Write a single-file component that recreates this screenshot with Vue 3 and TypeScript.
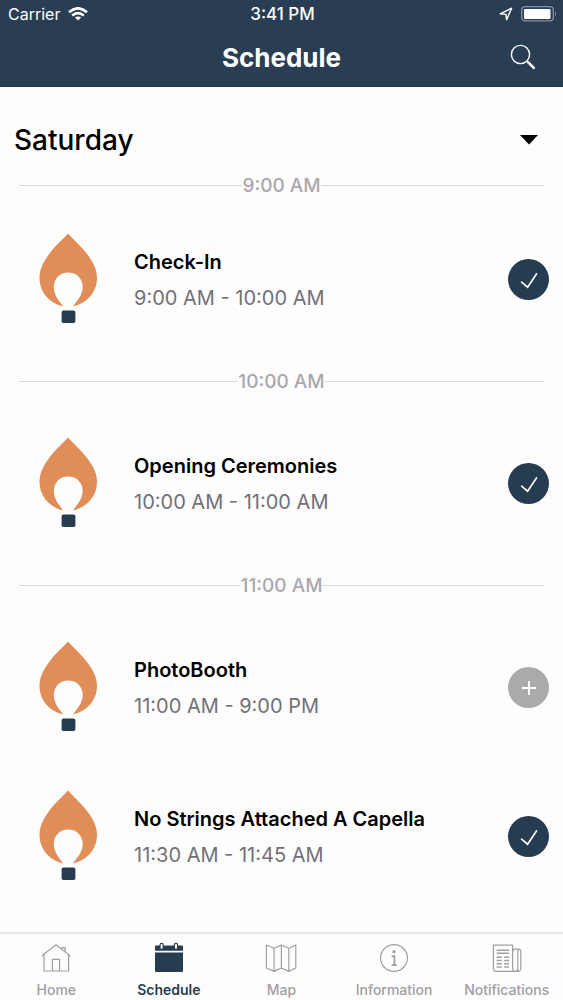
<script setup lang="ts">
import { ref } from 'vue'

interface ScheduleEvent {
  id: number
  name: string
  time: string
  added: boolean
}

interface Slot {
  label: string
  events: ScheduleEvent[]
}

const day = ref('Saturday')
const days: string[] = ['Saturday', 'Sunday']

const slots = ref<Slot[]>([
  { label: '9:00 AM', events: [{ id: 1, name: 'Check-In', time: '9:00 AM - 10:00 AM', added: true }] },
  { label: '10:00 AM', events: [{ id: 2, name: 'Opening Ceremonies', time: '10:00 AM - 11:00 AM', added: true }] },
  {
    label: '11:00 AM',
    events: [
      { id: 3, name: 'PhotoBooth', time: '11:00 AM - 9:00 PM', added: false },
      { id: 4, name: 'No Strings Attached A Capella', time: '11:30 AM - 11:45 AM', added: true },
    ],
  },
])

const tabs: string[] = ['Home', 'Schedule', 'Map', 'Information', 'Notifications']
const activeTab = ref('Schedule')
</script>

<template>
  <div class="app">
    <header class="header">
      <div class="status">
        <div class="status-left">
          <span>Carrier</span>
          <svg width="20" height="14" viewBox="0 0 20 14" fill="none" stroke="#fff" stroke-width="2.6">
            <path d="M1 5.2Q10 -2.6 19 5.2" />
            <path d="M4.2 8.5Q10 3.6 15.8 8.5" />
            <path d="M10 13.6L6.9 10.6Q10 8.2 13.1 10.6Z" fill="#fff" stroke="none" />
          </svg>
        </div>
        <span class="clock">3:41 PM</span>
        <div class="status-right">
          <svg width="14" height="14" viewBox="0 0 14 14" fill="none" stroke="#fff" stroke-width="1.4" stroke-linejoin="round">
            <path d="M1.2 6.8L12.6 1.2L7.6 12.6L6.9 7.4Z" />
          </svg>
          <svg width="36" height="16" viewBox="0 0 36 16">
            <rect x="0.7" y="0.7" width="31.6" height="14.2" rx="3.4" fill="none" stroke="#8492a1" stroke-width="1.3" />
            <rect x="3" y="3" width="26.5" height="10" rx="1" fill="#fff" />
            <path d="M34 5.2Q36 7.8 34 10.4Z" fill="#8492a1" />
          </svg>
        </div>
      </div>
      <div class="bar">
        <h1 class="title">Schedule</h1>
        <button class="search" type="button" aria-label="Search">
          <svg width="26" height="26" viewBox="0 0 26 26" fill="none" stroke="#fff">
            <circle cx="10.5" cy="10.5" r="9.1" stroke-width="1.4" />
            <path d="M17 17.3L18.2 18.5" stroke-width="1.4" />
            <path d="M18.3 18.3L23.8 23.8" stroke-width="2.6" stroke-linecap="round" />
          </svg>
        </button>
      </div>
    </header>

    <main class="content">
      <div class="day">
        <select v-model="day" class="day-select" aria-label="Day">
          <option v-for="d in days" :key="d" :value="d">{{ d }}</option>
        </select>
        <svg class="caret" width="18" height="10" viewBox="0 0 18 10"><path d="M0 0H18L9 9.6Z" fill="#000" /></svg>
      </div>

      <section v-for="slot in slots" :key="slot.label" class="slot">
        <h2 class="slot-label">{{ slot.label }}</h2>
        <article v-for="event in slot.events" :key="event.id" class="event">
          <svg class="balloon" width="58" height="94" viewBox="0 0 58 94">
            <path
              d="M29 .6C33 5 40 11.5 46 18.5C53 27 58 35 58 45C58 59 48.500 70 33.800 73.600C38 68 43.700 62 43.700 53.800C43.700 45.500 37.500 39.400 29.300 39.400C21 39.400 14.800 45.500 14.800 53.800C14.800 62 20 68 24.400 73.600C10 70 .5 59 .5 45C.5 35 5.500 27 12 18.500C18 11.500 25 5 29 .6Z"
              fill="#e08d57"
            />
            <rect x="22.6" y="77.6" width="13.8" height="12.4" rx="1.8" fill="#263d51" />
          </svg>
          <div class="event-text">
            <h3 class="event-name">{{ event.name }}</h3>
            <p class="event-time">{{ event.time }}</p>
          </div>
          <button
            class="toggle"
            :class="{ added: event.added }"
            type="button"
            :aria-pressed="event.added"
            :aria-label="(event.added ? 'Remove ' : 'Add ') + event.name"
            @click="event.added = !event.added"
          >
            <svg v-if="event.added" width="20" height="20" viewBox="0 0 20 20" fill="none" stroke="#fff" stroke-width="1.6" stroke-linecap="round">
              <path d="M2.6 12.2L8.6 17.2L17.6 3.8" />
            </svg>
            <svg v-else width="20" height="20" viewBox="0 0 20 20" fill="none" stroke="#fff" stroke-width="1.8">
              <path d="M3 10H17M10 3V17" />
            </svg>
          </button>
        </article>
      </section>
    </main>

    <nav class="tabs">
      <a
        v-for="tab in tabs"
        :key="tab"
        href="#"
        class="tab"
        :class="{ active: tab === activeTab }"
        :aria-current="tab === activeTab ? 'page' : undefined"
        @click.prevent="activeTab = tab"
      >
        <svg width="32" height="32" viewBox="0 0 32 32" fill="none" stroke="currentColor" stroke-width="1.2">
          <g v-if="tab === 'Home'">
            <path d="M2.2 13.5L16 2.7L29.8 13.5V14.5M2.2 13.5V14.5M4 12.5V29H28.6V12.5M12.4 29V17.4H19.6V29M21.8 7V5.6H25.2V9.6" />
          </g>
          <g v-else-if="tab === 'Schedule'" fill="currentColor" stroke="none">
            <path d="M2 4.5Q2 3.5 3 3.5H29Q30 3.5 30 4.5V8.800H2ZM2 10.400H30V29Q30 30 29 30H3Q2 30 2 29Z" />
            <rect x="7" y="1.4" width="3.2" height="6" rx="1.6" stroke="currentColor" fill="#fff" />
            <rect x="21.4" y="1.4" width="3.2" height="6" rx="1.6" stroke="currentColor" fill="#fff" />
          </g>
          <g v-else-if="tab === 'Map'" stroke-linejoin="round">
            <path d="M1.4 3L9 6.2L16.4 3L23.8 6.2L30.8 3V26L23.8 29.4L16.4 26L9 29.4L1.4 26ZM9 6.2V29.4M16.4 3V26M23.8 6.2V29.4" />
          </g>
          <g v-else-if="tab === 'Information'">
            <circle cx="16" cy="16" r="13.4" />
            <circle cx="16" cy="9.8" r="1.7" fill="currentColor" stroke="none" />
            <path d="M13.6 14.2H16.4V23M13.6 23.2H18.8" stroke-width="1.7" />
          </g>
          <g v-else>
            <path d="M21.6 25.4V3.2H2.4V26.6Q2.4 29.4 5.4 29.4H26.4Q29.8 29.4 29.8 26V9.8Q29.8 7.2 27.4 7.2H24.4Q21.6 7.2 21.6 10V25.4Q21.6 29.4 24 29.4Q26.800 29.400 26.800 26V10Q26.800 7.800 28 7.200" />
            <path d="M5.6 8.2H18M5.6 11.2H18" stroke-width="1.5" />
            <path d="M5.6 15.3H10.8M13.2 15.3H18M5.6 18.5H10.8M13.2 18.5H18M5.6 21.7H10.8M13.2 21.7H18M5.6 24.9H10.8M13.2 24.9H18" stroke-width="1.5" />
          </g>
        </svg>
        <span>{{ tab }}</span>
      </a>
    </nav>
  </div>
</template>

<style>
body {
  margin: 0;
  background: #fefdfe;
}
</style>

<style scoped>
.app {
  min-height: 100vh;
  display: flex;
  flex-direction: column;
  font-family: Inter, "Liberation Sans", sans-serif;
  color: #000;
}

.app svg {
  display: block;
  flex: none;
}

.header {
  background: #293e52;
  color: #fff;
  border-bottom: 1px solid #22384a;
}

.status {
  display: grid;
  grid-template-columns: 1fr auto 1fr;
  align-items: center;
  height: 28px;
  padding: 0 6px 0 8px;
  font-size: 16px;
}

.status-left,
.status-right {
  display: flex;
  align-items: center;
  gap: 8px;
}

.status-right {
  justify-content: flex-end;
}

.clock {
  font-size: 17px;
  font-weight: 500;
}

.bar {
  display: grid;
  grid-template-columns: 1fr auto 1fr;
  align-items: center;
  height: 58px;
  padding: 0 27px;
}

.title {
  grid-column: 2;
  margin: 0;
  font-size: 26px;
  font-weight: 700;
}

.search {
  justify-self: end;
  padding: 0;
  border: 0;
  background: none;
}

.content {
  flex: 1;
}

.day {
  display: flex;
  align-items: center;
  padding: 28px 25px 0 14px;
}

.day-select {
  flex: 1;
  height: 50px;
  padding: 0;
  margin-right: -18px;
  border: 0;
  appearance: none;
  background: none;
  color: #000;
  font-family: inherit;
  font-size: 28px;
  font-weight: 500;
}

.caret {
  pointer-events: none;
}

.slot-label {
  display: flex;
  align-items: center;
  height: 55px;
  margin: 0 19px;
  color: #aaa8ad;
  font-size: 19px;
  font-weight: 500;
}

.slot:first-of-type .slot-label {
  height: 40px;
}

.slot-label::before,
.slot-label::after {
  content: "";
  flex: 1;
  height: 1px;
  background: #d8d7da;
}

.event {
  display: flex;
  align-items: center;
  height: 149px;
  padding: 0 14px 0 39px;
}

.event-text {
  flex: 1;
  padding-left: 37px;
}

.event-name,
.event-time {
  margin: 0;
  font-size: 20px;
  line-height: 36px;
}

.event-name {
  font-weight: 600;
}

.event-time {
  color: #727075;
}

.toggle {
  display: flex;
  align-items: center;
  justify-content: center;
  width: 41px;
  height: 41px;
  padding: 0;
  border: 0;
  border-radius: 50%;
  background: #aaa9ac;
}

.toggle.added {
  background: #263d51;
}

.tabs {
  position: sticky;
  bottom: 0;
  display: grid;
  grid-template-columns: repeat(5, 1fr);
  height: 66px;
  border-top: 2px solid #e6e5e7;
  background: #fefdfe;
}

.tab {
  display: flex;
  flex-direction: column;
  align-items: center;
  gap: 6px;
  padding-top: 8px;
  color: #a09ea4;
  font-size: 14px;
  font-weight: 500;
  line-height: 20px;
  text-decoration: none;
}

.tab.active {
  color: #263d51;
  font-weight: 600;
}
</style>
